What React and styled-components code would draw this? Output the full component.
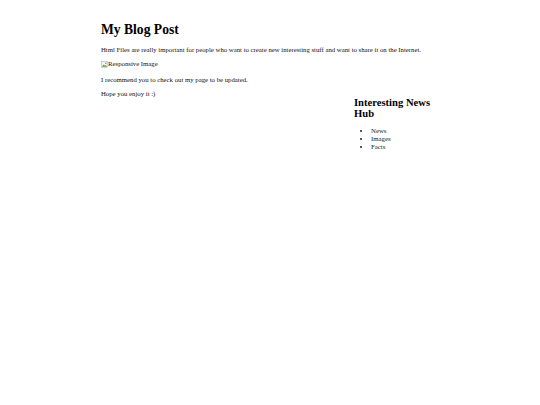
import React from "react";
import styled, { createGlobalStyle } from "styled-components";

const Global = createGlobalStyle`
  html, body { margin: 0; padding: 0; background: #fff; }
  body { font-family: "Liberation Serif", "Times New Roman", serif; color: #000; }
`;

const Page = styled.div`
  width: 330px;
  margin-left: 101px;
  padding-top: 1px;
`;

const Title = styled.h1`
  font-size: 13.6px;
  font-weight: bold;
  line-height: 1.15;
  margin: 20.5px 0 9px;
`;

const Para = styled.p`
  font-size: 6.75px;
  margin: 6.6px 0;
  line-height: 7.6px;
  white-space: nowrap;
  color: #111;
`;

const ImgAlt = styled.span`
  display: inline-flex;
  align-items: center;
`;

const Aside = styled.aside`
  margin-left: 253px;
  margin-top: -7.5px;
  width: 85px;
`;

const SideTitle = styled.h2`
  font-size: 10.6px;
  font-weight: bold;
  margin: 0 0 8.5px;
  line-height: 11px;
`;

const List = styled.ul`
  margin: 7px 0;
  padding-left: 17px;
  font-size: 6.8px;
  line-height: 8px;
  color: #222;
`;

const Item = styled.li``;

function BrokenIcon() {
  return (
    <svg width="7" height="7" viewBox="0 0 16 16">
      <rect x="1.5" y="1.5" width="13" height="13" fill="#f3f3f3" stroke="#9a9a9a" />
      <path d="M2 13 L6 8 L9 11 L11 9 L14 13 Z" fill="#5aa04a" />
      <circle cx="11" cy="5" r="1.6" fill="#4a86c8" />
    </svg>
  );
}

export default function App() {
  return (
    <>
      <Global />
      <Page>
        <main>
          <Title>My Blog Post</Title>
          <Para>
            Html Files are really important for people who want to create new interesting stuff and want to share it on the Internet.
          </Para>
          <Para>
            <ImgAlt>
              <BrokenIcon />
              Responsive Image
            </ImgAlt>
          </Para>
          <Para>I recommend you to check out my page to be updated.</Para>
          <Para>Hope you enjoy it :)</Para>
        </main>
        <Aside>
          <SideTitle>Interesting News Hub</SideTitle>
          <List>
            <Item>News</Item>
            <Item>Images</Item>
            <Item>Facts</Item>
          </List>
        </Aside>
      </Page>
    </>
  );
}
